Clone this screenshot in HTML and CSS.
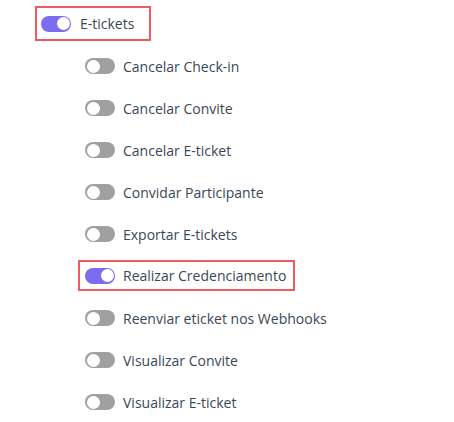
FILE: index.html
```html
<!DOCTYPE html>
<html lang="pt">
<head>
<meta charset="utf-8">
<link rel="stylesheet" href="styles.css">
</head>
<body>
<div class="tree">
  <div class="row parent hl">
    <span class="switch on"><span class="knob"></span></span>
    <span class="label">E-tickets</span>
  </div>
  <div class="children">
    <div class="row"><span class="switch"><span class="knob"></span></span><span class="label">Cancelar Check-in</span></div>
    <div class="row"><span class="switch"><span class="knob"></span></span><span class="label">Cancelar Convite</span></div>
    <div class="row"><span class="switch"><span class="knob"></span></span><span class="label">Cancelar E-ticket</span></div>
    <div class="row"><span class="switch"><span class="knob"></span></span><span class="label">Convidar Participante</span></div>
    <div class="row"><span class="switch"><span class="knob"></span></span><span class="label">Exportar E-tickets</span></div>
    <div class="row hl2"><span class="switch on"><span class="knob"></span></span><span class="label">Realizar Credenciamento</span></div>
    <div class="row"><span class="switch"><span class="knob"></span></span><span class="label">Reenviar eticket nos Webhooks</span></div>
    <div class="row"><span class="switch"><span class="knob"></span></span><span class="label">Visualizar Convite</span></div>
    <div class="row"><span class="switch"><span class="knob"></span></span><span class="label">Visualizar E-ticket</span></div>
  </div>
</div>
</body>
</html>
```
FILE: styles.css
```css
html, body {
  margin: 0;
  padding: 0;
  background: #ffffff;
}
body {
  font-family: "Open Sans", "Noto Sans", sans-serif;
  font-size: 14px;
  color: #3a4756;
}
.tree {
  padding: 6px 0 0 35px;
}
.row {
  display: flex;
  align-items: center;
  height: 42px;
  gap: 8px;
}
.parent {
  width: 116px;
  height: 35px;
  box-sizing: border-box;
  border: 2px solid #f05a5e;
  padding-left: 4px;
  gap: 9px;
}
.children {
  display: flex;
  flex-direction: column;
  padding-left: 50px;
  padding-top: 4px;
}
.hl2 {
  width: 217px;
  height: 31px;
  box-sizing: border-box;
  border: 2px solid #f05a5e;
  margin: 5px 0 6px -7px;
  padding-left: 5px;
}
.switch {
  position: relative;
  width: 30px;
  height: 16px;
  border-radius: 8px;
  background: #a0a0a0;
  flex: none;
}
.switch.on {
  background: #7b6cf0;
}
.knob {
  position: absolute;
  top: 1.5px;
  left: 1.5px;
  width: 13px;
  height: 13px;
  border-radius: 50%;
  background: #ffffff;
}
.switch.on .knob {
  left: 15.5px;
}
.label {
  white-space: nowrap;
}
```
